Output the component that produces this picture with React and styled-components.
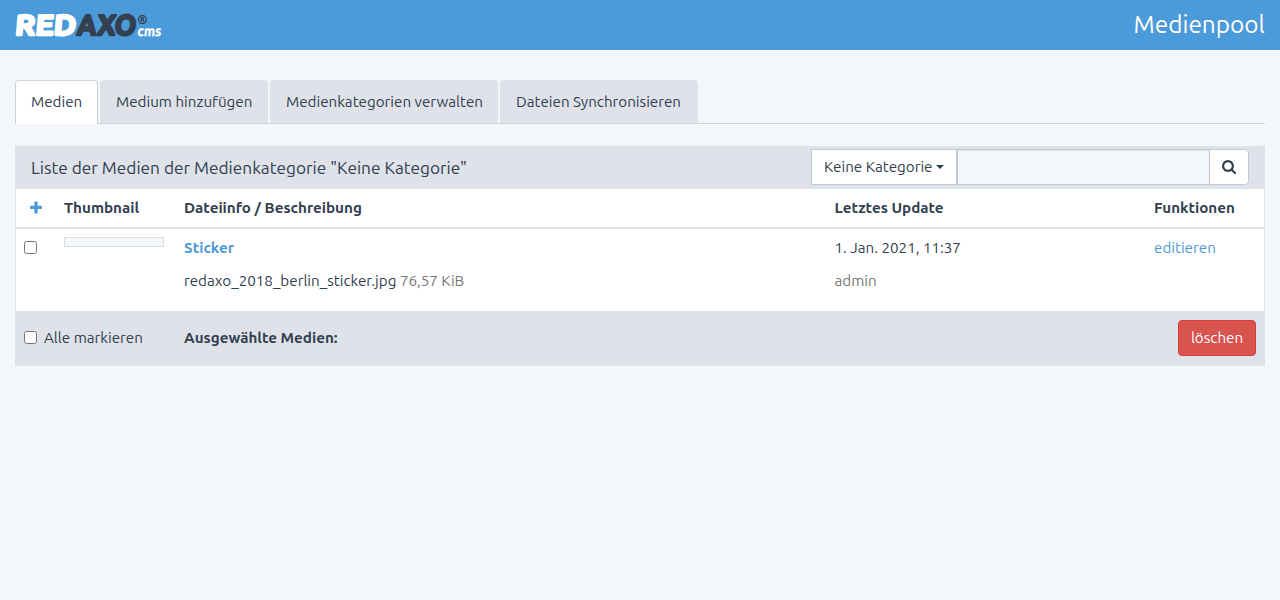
import React from "react";
import styled, { createGlobalStyle } from "styled-components";

const color = {
  text: "#324050",
  link: "#4b9ad9",
  page: "#f3f6fb",
  panel: "#dfe3e9",
  line: "#c1c9d4",
  muted: "#777777",
};

const GlobalStyle = createGlobalStyle`
  *, *::before, *::after { box-sizing: border-box; }
  body {
    margin: 0;
    background: ${color.page};
    color: ${color.text};
    font-family: Ubuntu, "Noto Sans", "Open Sans", sans-serif;
    font-size: 15.2px;
    line-height: 22px;
  }
`;

const Label = styled.span`
  white-space: nowrap;
`;

const Header = styled.header`
  display: flex;
  justify-content: space-between;
  height: 50px;
  padding: 0 15px;
  background: ${color.link};
`;

const Logo = styled.svg`
  display: block;
  width: 150px;
  height: 50px;
  overflow: visible;
  font-family: Ubuntu, "Open Sans", sans-serif;
  font-weight: 700;
`;

const PageTitle = styled.h1`
  margin: 0;
  color: #fff;
  font-size: 24.4px;
  font-weight: 400;
  line-height: 49px;
`;

const Main = styled.main`
  padding: 30px 15px 0;
`;

const Tabs = styled.nav`
  display: flex;
  gap: 2px;
  height: 44px;
  margin-bottom: 22px;
  border-bottom: 1px solid #ccd3dd;
`;

const Tab = styled.a`
  width: ${(p) => p.$width}px;
  height: ${(p) => (p.$active ? 44 : 43)}px;
  padding: 10px 0 0 15px;
  border: 1px solid ${(p) => (p.$active ? "#ccd3dd" : color.panel)};
  border-bottom: 0;
  border-radius: 4px 4px 0 0;
  background: ${(p) => (p.$active ? "#fff" : color.panel)};
`;

const Panel = styled.section`
  border: 1px solid ${color.panel};
  border-bottom-color: #e4e8ec;
  background: #fff;
`;

const PanelHeading = styled.div`
  display: flex;
  justify-content: space-between;
  height: 42px;
  padding: 2px 15px 0;
  background: ${color.panel};
`;

const PanelTitle = styled.h2`
  margin: 0;
  font-size: 17.25px;
  font-weight: 400;
  line-height: 38px;
`;

const SearchGroup = styled.div`
  display: flex;
  height: 36px;
`;

const CategoryButton = styled.button`
  display: flex;
  align-items: center;
  justify-content: space-between;
  width: 146px;
  padding: 0 12px;
  border: 1px solid ${color.line};
  background: #fff;
  color: inherit;
  font: inherit;
`;

const Caret = styled.span`
  border: 4px solid transparent;
  border-top-color: currentColor;
  border-bottom: 0;
`;

const SearchInput = styled.input`
  width: 252px;
  border: 1px solid ${color.line};
  border-right: 0;
  background: ${color.page};
  box-shadow: inset 0 1px 1px rgba(0, 0, 0, 0.075);
`;

const SearchButton = styled.button`
  display: flex;
  align-items: center;
  justify-content: center;
  width: 40px;
  padding: 0;
  border: 1px solid ${color.line};
  border-radius: 0 4px 4px 0;
  background: #fff;
  color: inherit;
`;

const Icon = styled.svg`
  display: block;
  width: ${(p) => p.$width}px;
  height: ${(p) => p.$height}px;
  fill: currentColor;
`;

const Row = styled.div`
  display: grid;
  grid-template-columns: 40px 120px 650.5px 319.5px 1fr;
`;

const HeadRow = styled(Row)`
  height: 40px;
  border-bottom: 2px solid ${color.panel};
  font-weight: 700;
`;

const BodyRow = styled(Row)`
  height: 82px;
`;

const FootRow = styled.div`
  display: grid;
  grid-template-columns: 160px 1fr auto;
  height: 54px;
  background: ${color.panel};
`;

const Cell = styled.div`
  padding: 8px;
`;

const AddCell = styled(Cell)`
  padding: 11px 0 0 14px;
  color: ${color.link};
`;

const FootCell = styled(Cell)`
  display: flex;
  padding-top: 16px;
  font-weight: ${(p) => (p.$bold ? 700 : 400)};
`;

const Checkbox = styled.input.attrs({ type: "checkbox" })`
  display: block;
  width: 13px;
  height: 13px;
  margin: 4px 7px 0 0;
`;

const Thumbnail = styled.div`
  width: 100px;
  height: 10px;
  border: 1px solid #dddddd;
  background: ${color.page};
`;

const Line = styled.p`
  margin: 0 0 11px;
`;

const Link = styled.a`
  color: ${color.link};
  font-weight: ${(p) => (p.$bold ? 700 : 400)};
`;

const Muted = styled.span`
  color: ${color.muted};
`;

const DeleteButton = styled.button`
  width: 78px;
  height: 36px;
  margin: 9px 8px 0 0;
  padding: 0;
  border: 1px solid #d43f3a;
  border-radius: 4px;
  background: #d9534f;
  color: #fff;
  font: inherit;
`;

const tabs = [
  { label: "Medien", width: 83, active: true },
  { label: "Medium hinzufügen", width: 168 },
  { label: "Medienkategorien verwalten", width: 228 },
  { label: "Dateien Synchronisieren", width: 198 },
];

function RedaxoLogo() {
  return (
    <Logo viewBox="0 0 150 50" role="img" aria-label="REDAXO CMS">
      <g transform="translate(-0.5 35) skewX(-5)" fontSize="28.5" strokeWidth="2.4" strokeLinejoin="round">
        <text fill="#fff" stroke="#fff" textLength="61" lengthAdjust="spacingAndGlyphs">RED</text>
        <text x="62" fill="#324050" stroke="#324050" textLength="59" lengthAdjust="spacingAndGlyphs">AXO</text>
      </g>
      <text x="122.5" y="23.5" fill="#324050" fontSize="12" textLength="10" lengthAdjust="spacingAndGlyphs">®</text>
      <g transform="translate(122 35.6) skewX(-5)">
        <text fill="#fff" stroke="#fff" strokeWidth="0.3" fontSize="14" textLength="24" lengthAdjust="spacingAndGlyphs">cms</text>
      </g>
    </Logo>
  );
}

export default function App() {
  return (
    <>
      <GlobalStyle />
      <Header>
        <RedaxoLogo />
        <PageTitle><Label>Medienpool</Label></PageTitle>
      </Header>
      <Main>
        <Tabs>
          {tabs.map((t) => (
            <Tab key={t.label} $width={t.width} $active={t.active}>
              <Label>{t.label}</Label>
            </Tab>
          ))}
        </Tabs>
        <Panel>
          <PanelHeading>
            <PanelTitle><Label>Liste der Medien der Medienkategorie "Keine Kategorie"</Label></PanelTitle>
            <SearchGroup>
              <CategoryButton><Label>Keine Kategorie</Label><Caret /></CategoryButton>
              <SearchInput aria-label="Suche" />
              <SearchButton aria-label="Suchen">
                <Icon $width={14.1} $height={15.2} viewBox="0 0 1664 1792">
                  <path d="M1152 832q0-185-131.5-316.5T704 384 387.5 515.5 256 832t131.5 316.5T704 1280t316.5-131.5T1152 832zm512 832q0 52-38 90t-90 38q-54 0-90-38l-343-342q-179 124-399 124-143 0-273.5-55.5t-225-150-150-225T0 832t55.5-273.5 150-225 225-150T704 128t273.5 55.5 225 150 150 225T1408 832q0 220-124 399l343 343q37 37 37 90z" />
                </Icon>
              </SearchButton>
            </SearchGroup>
          </PanelHeading>
          <HeadRow>
            <AddCell>
              <Icon $width={12} $height={16} viewBox="0 0 1408 1792">
                <path d="M1408 736v192q0 40-28 68t-68 28H896v416q0 40-28 68t-68 28H608q-40 0-68-28t-28-68v-416H96q-40 0-68-28T0 928V736q0-40 28-68t68-28h416V224q0-40 28-68t68-28h192q40 0 68 28t28 68v416h416q40 0 68 28t28 68z" />
              </Icon>
            </AddCell>
            <Cell><Label>Thumbnail</Label></Cell>
            <Cell><Label>Dateiinfo / Beschreibung</Label></Cell>
            <Cell><Label>Letztes Update</Label></Cell>
            <Cell><Label>Funktionen</Label></Cell>
          </HeadRow>
          <BodyRow>
            <Cell><Checkbox aria-label="Sticker markieren" /></Cell>
            <Cell><Thumbnail /></Cell>
            <Cell>
              <Line><Link $bold><Label>Sticker</Label></Link></Line>
              <Line><Label>redaxo_2018_berlin_sticker.jpg <Muted>76,57 KiB</Muted></Label></Line>
            </Cell>
            <Cell>
              <Line><Label>1. Jan. 2021, 11:37</Label></Line>
              <Line><Muted><Label>admin</Label></Muted></Line>
            </Cell>
            <Cell><Link><Label>editieren</Label></Link></Cell>
          </BodyRow>
          <FootRow>
            <FootCell><Checkbox aria-label="Alle markieren" /><Label>Alle markieren</Label></FootCell>
            <FootCell $bold><Label>Ausgewählte Medien:</Label></FootCell>
            <DeleteButton><Label>löschen</Label></DeleteButton>
          </FootRow>
        </Panel>
      </Main>
    </>
  );
}
